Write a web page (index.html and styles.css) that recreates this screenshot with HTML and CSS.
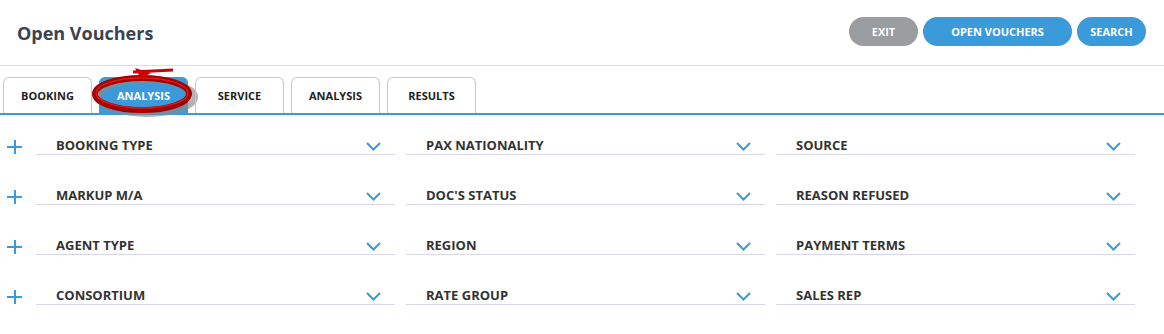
FILE: index.html
```html
<!DOCTYPE html>
<html lang="en">
<head>
    <title>Open Vouchers</title>
    <link rel="stylesheet" href="styles.css">
</head>
<body>

<div class="page">
    <div class="header">
        <h1>Open Vouchers</h1>
        <div class="actions">
            <button class="btn btn-grey">EXIT</button>
            <button class="btn btn-wide">OPEN VOUCHERS</button>
            <button class="btn">SEARCH</button>
        </div>
    </div>

    <div class="tabs">
        <div class="tab">BOOKING</div>
        <div class="tab active">ANALYSIS
            <svg class="mark" width="130" height="64" viewBox="0 0 130 64">
                <ellipse cx="70" cy="33" rx="48" ry="17" fill="none" stroke="#8a8a8a" stroke-width="6" opacity="0.65"/>
                <ellipse cx="65" cy="30" rx="47" ry="16" fill="none" stroke="#a50000" stroke-width="6"/>
                <ellipse cx="65" cy="29" rx="46" ry="15" fill="none" stroke="#e01818" stroke-width="1.5"/>
                <path d="M56 8 L96 6" stroke="#d00000" stroke-width="3" fill="none"/>
                <path d="M58 4 L74 9 L64 15 Z" fill="#d00000"/>
            </svg>
        </div>
        <div class="tab">SERVICE</div>
        <div class="tab">ANALYSIS</div>
        <div class="tab">RESULTS</div>
    </div>

    <div class="filters">
        <span class="plus"></span>
        <div class="field"><span>BOOKING TYPE</span><svg class="chev" width="15" height="9" viewBox="0 0 15 9"><path d="M1 1 L7.5 7.5 L14 1"/></svg></div>
        <div class="field"><span>PAX NATIONALITY</span><svg class="chev" width="15" height="9" viewBox="0 0 15 9"><path d="M1 1 L7.5 7.5 L14 1"/></svg></div>
        <div class="field"><span>SOURCE</span><svg class="chev" width="15" height="9" viewBox="0 0 15 9"><path d="M1 1 L7.5 7.5 L14 1"/></svg></div>

        <span class="plus"></span>
        <div class="field"><span>MARKUP M/A</span><svg class="chev" width="15" height="9" viewBox="0 0 15 9"><path d="M1 1 L7.5 7.5 L14 1"/></svg></div>
        <div class="field"><span>DOC'S STATUS</span><svg class="chev" width="15" height="9" viewBox="0 0 15 9"><path d="M1 1 L7.5 7.5 L14 1"/></svg></div>
        <div class="field"><span>REASON REFUSED</span><svg class="chev" width="15" height="9" viewBox="0 0 15 9"><path d="M1 1 L7.5 7.5 L14 1"/></svg></div>

        <span class="plus"></span>
        <div class="field"><span>AGENT TYPE</span><svg class="chev" width="15" height="9" viewBox="0 0 15 9"><path d="M1 1 L7.5 7.5 L14 1"/></svg></div>
        <div class="field"><span>REGION</span><svg class="chev" width="15" height="9" viewBox="0 0 15 9"><path d="M1 1 L7.5 7.5 L14 1"/></svg></div>
        <div class="field"><span>PAYMENT TERMS</span><svg class="chev" width="15" height="9" viewBox="0 0 15 9"><path d="M1 1 L7.5 7.5 L14 1"/></svg></div>

        <span class="plus"></span>
        <div class="field"><span>CONSORTIUM</span><svg class="chev" width="15" height="9" viewBox="0 0 15 9"><path d="M1 1 L7.5 7.5 L14 1"/></svg></div>
        <div class="field"><span>RATE GROUP</span><svg class="chev" width="15" height="9" viewBox="0 0 15 9"><path d="M1 1 L7.5 7.5 L14 1"/></svg></div>
        <div class="field"><span>SALES REP</span><svg class="chev" width="15" height="9" viewBox="0 0 15 9"><path d="M1 1 L7.5 7.5 L14 1"/></svg></div>
    </div>
</div>

</body>
</html>
```

FILE: styles.css
```css
body {
    font-family: "Open Sans", Arial, sans-serif;
    margin: 0;
    padding: 0;
    background-color: #fff;
    color: #333;
}
.page {
    width: 1164px;
}
.header {
    height: 65px;
    display: flex;
    align-items: center;
    justify-content: space-between;
    padding: 0 18px 0 17px;
    border-bottom: 1px solid #dedcec;
}
.header h1 {
    margin: 0;
    font-size: 18px;
    font-weight: 700;
    color: #3b4252;
}
.actions {
    display: flex;
    gap: 5px;
    margin-top: -2px;
}
.btn {
    height: 29px;
    width: 69px;
    border: none;
    border-radius: 15px;
    background-color: #3b9ad9;
    color: #fff;
    font-family: "Open Sans", Arial, sans-serif;
    font-size: 11px;
    font-weight: 700;
    cursor: pointer;
}
.btn-grey {
    background-color: #999da0;
}
.btn-wide {
    width: 149px;
}
.tabs {
    display: flex;
    gap: 7px;
    padding: 11px 0 0 3px;
    border-bottom: 2px solid #3b9ad9;
}
.tab {
    position: relative;
    width: 87px;
    height: 35px;
    border: 1px solid #c8c8c8;
    border-bottom: none;
    border-radius: 6px 6px 0 0;
    display: flex;
    align-items: center;
    justify-content: center;
    font-size: 11px;
    font-weight: 700;
    color: #222;
}
.tab.active {
    background-color: #3b9ad9;
    border-color: #3b9ad9;
    color: #fff;
}
.mark {
    position: absolute;
    left: -23px;
    top: -14px;
}
.filters {
    display: grid;
    grid-template-columns: 25px 359px 359px 359px;
    column-gap: 11px;
    row-gap: 31px;
    padding-top: 21px;
}
.plus {
    position: relative;
    height: 19px;
}
.plus::before,
.plus::after {
    content: "";
    position: absolute;
    background-color: #3b9ad9;
}
.plus::before {
    left: 7px;
    top: 10px;
    width: 15px;
    height: 2px;
}
.plus::after {
    left: 14px;
    top: 4px;
    width: 2px;
    height: 14px;
}
.field {
    height: 18px;
    display: flex;
    align-items: center;
    justify-content: space-between;
    padding: 0 14px 0 20px;
    border-bottom: 1px solid #d8d6ec;
    font-size: 13px;
    font-weight: 700;
    color: #333;
}
.chev {
    fill: none;
    stroke: #3b9ad9;
    stroke-width: 2;
    margin-top: 3px;
}
```
